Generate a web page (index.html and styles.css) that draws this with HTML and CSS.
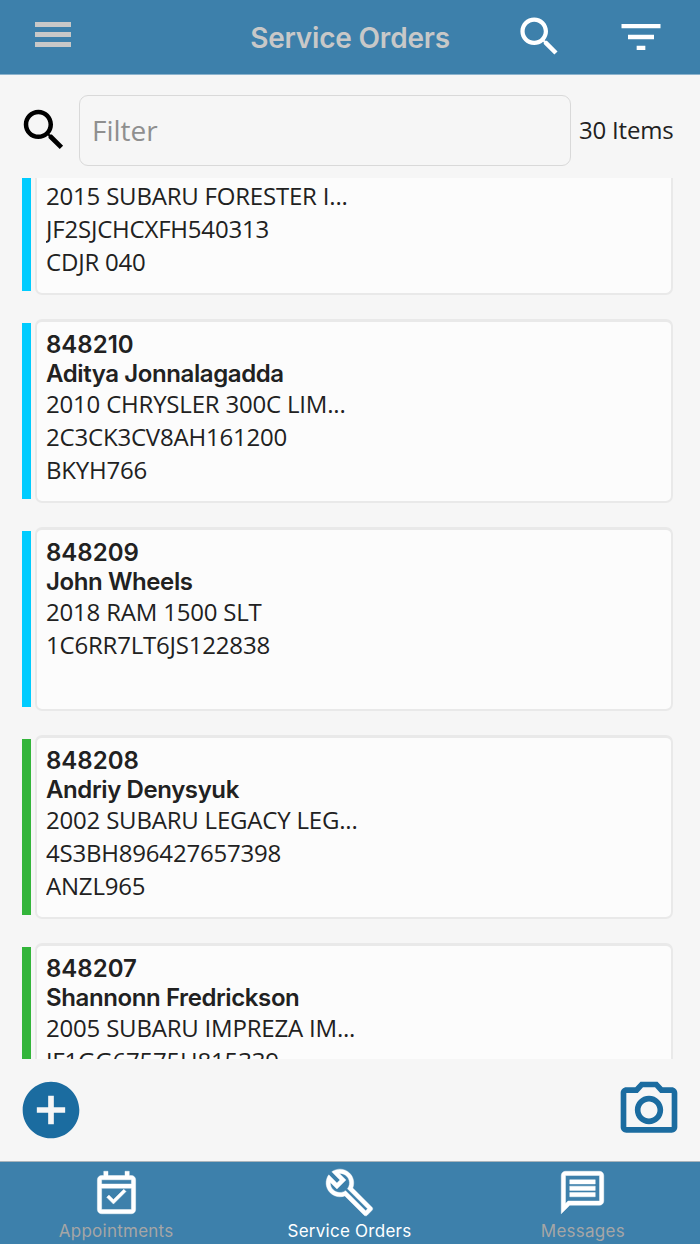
FILE: index.html
```
<!DOCTYPE html>
<html lang="en">
<head>
    <meta charset="UTF-8">
    <meta name="viewport" content="width=device-width, initial-scale=1.0">
    <title>Service Orders</title>
    <link rel="stylesheet" href="styles.css">
</head>
<body>

    <!-- Top bar -->
    <header class="topbar">
        <button type="button" class="menu" aria-label="Menu">
            <span></span>
            <span></span>
            <span></span>
        </button>
        <h1>Service Orders</h1>
        <div class="actions">
            <svg class="search-icon" viewBox="0 0 24 24"><path d="M15.5 14h-.79l-.28-.27C15.41 12.59 16 11.11 16 9.5 16 5.91 13.09 3 9.5 3S3 5.91 3 9.5 5.91 16 9.5 16c1.61 0 3.09-.59 4.23-1.57l.27.28v.79l5 4.99L20.49 19l-4.99-5zm-6 0C7.01 14 5 11.99 5 9.5S7.01 5 9.5 5 14 7.01 14 9.5 11.99 14 9.5 14z"/></svg>
            <svg class="filter-icon" viewBox="0 0 24 24"><path d="M10 18h4v-2h-4v2zM3 6v2h18V6H3zm3 7h12v-2H6v2z"/></svg>
        </div>
    </header>

    <!-- Filter row -->
    <div class="filter-row">
        <svg viewBox="0 0 24 24"><path d="M15.5 14h-.79l-.28-.27C15.41 12.59 16 11.11 16 9.5 16 5.91 13.09 3 9.5 3S3 5.91 3 9.5 5.91 16 9.5 16c1.61 0 3.09-.59 4.23-1.57l.27.28v.79l5 4.99L20.49 19l-4.99-5zm-6 0C7.01 14 5 11.99 5 9.5S7.01 5 9.5 5 14 7.01 14 9.5 11.99 14 9.5 14z"/></svg>
        <input type="text" placeholder="Filter">
        <span class="count">30 Items</span>
    </div>

    <!-- Orders -->
    <main class="orders">
        <div class="order scrolled">
            <div class="status open"></div>
            <div class="card">
                <p>2015 SUBARU FORESTER I...</p>
                <p>JF2SJCHCXFH540313</p>
                <p>CDJR 040</p>
            </div>
        </div>
        <div class="order">
            <div class="status open"></div>
            <div class="card">
                <h2 class="number">848210</h2>
                <h2>Aditya Jonnalagadda</h2>
                <p>2010 CHRYSLER 300C LIM...</p>
                <p>2C3CK3CV8AH161200</p>
                <p>BKYH766</p>
            </div>
        </div>
        <div class="order">
            <div class="status open"></div>
            <div class="card">
                <h2 class="number">848209</h2>
                <h2>John Wheels</h2>
                <p>2018 RAM 1500 SLT</p>
                <p>1C6RR7LT6JS122838</p>
            </div>
        </div>
        <div class="order">
            <div class="status done"></div>
            <div class="card">
                <h2 class="number">848208</h2>
                <h2>Andriy Denysyuk</h2>
                <p>2002 SUBARU LEGACY LEG...</p>
                <p>4S3BH896427657398</p>
                <p>ANZL965</p>
            </div>
        </div>
        <div class="order">
            <div class="status done"></div>
            <div class="card">
                <h2 class="number">848207</h2>
                <h2>Shannonn Fredrickson</h2>
                <p>2005 SUBARU IMPREZA IM...</p>
                <p>JF1GG67575H815339</p>
            </div>
        </div>
    </main>

    <!-- Add / camera buttons -->
    <div class="tools">
        <svg class="add" viewBox="0 0 24 24"><path d="M12 2C6.48 2 2 6.48 2 12s4.48 10 10 10 10-4.48 10-10S17.52 2 12 2zm5 11h-4v4h-2v-4H7v-2h4V7h2v4h4v2z"/></svg>
        <svg class="camera" viewBox="0 0 24 24"><path d="M14.12 4l1.83 2H20v12H4V6h4.05l1.83-2h4.24M15 2H9L7.17 4H4c-1.1 0-2 .9-2 2v12c0 1.1.9 2 2 2h16c1.1 0 2-.9 2-2V6c0-1.1-.9-2-2-2h-3.17L15 2zm-3 7c1.65 0 3 1.35 3 3s-1.35 3-3 3-3-1.35-3-3 1.35-3 3-3m0-2c-2.76 0-5 2.24-5 5s2.24 5 5 5 5-2.24 5-5-2.24-5-5-5z"/></svg>
    </div>

    <!-- Tab bar -->
    <nav class="tabs">
        <a class="tab">
            <svg viewBox="0 0 24 24"><path d="M19 4h-1V2h-2v2H8V2H6v2H5c-1.11 0-1.99.9-1.99 2L3 20c0 1.1.89 2 2 2h14c1.1 0 2-.9 2-2V6c0-1.1-.9-2-2-2zm0 16H5V10h14v10zm0-12H5V6h14v2zM10.56 17.46l5.93-5.93-1.06-1.06-4.87 4.87-2.11-2.11-1.06 1.06z"/></svg>
            <span>Appointments</span>
        </a>
        <a class="tab active">
            <svg viewBox="0 0 24 24"><path d="M22.61 18.99l-9.08-9.08c.93-2.34.45-5.1-1.44-7C9.79.61 6.21.4 3.66 2.26L7.5 6.11 6.08 7.52 2.25 3.69C.39 6.23.6 9.82 2.9 12.11c1.86 1.86 4.57 2.35 6.89 1.48l9.11 9.11c.39.39 1.02.39 1.41 0l2.3-2.3c.4-.38.4-1.01 0-1.41zm-3 1.6l-9.46-9.46c-.61.45-1.29.72-2 .82-1.36.2-2.79-.21-3.83-1.25C3.37 9.76 2.93 8.5 3 7.26l3.09 3.09 4.24-4.24-3.09-3.09c1.24-.07 2.49.37 3.44 1.31 1.08 1.08 1.49 2.57 1.24 3.96-.12.71-.42 1.37-.88 1.96l9.45 9.45-.88.89z"/></svg>
            <span>Service Orders</span>
        </a>
        <a class="tab">
            <svg viewBox="0 0 24 24"><path d="M20 2H4c-1.1 0-1.99.9-1.99 2L2 22l4-4h14c1.1 0 2-.9 2-2V4c0-1.1-.9-2-2-2zm0 14H5.17L4 17.17V4h16v12zM6 12h12v2H6zm0-3h12v2H6zm0-3h12v2H6z"/></svg>
            <span>Messages</span>
        </a>
    </nav>

</body>
</html>
```
FILE: styles.css
```
* {
    box-sizing: border-box;
}

html, body {
    height: 100%;
    margin: 0;
}

body {
    display: flex;
    flex-direction: column;
    background-color: #f6f6f6;
    color: #212121;
    font-family: "Open Sans", sans-serif;
    font-size: 24px;
    letter-spacing: -0.2px;
    overflow: hidden;
}

h1, h2, p {
    margin: 0;
}

svg {
    display: block;
    flex: none;
}

/* Top bar */
.topbar {
    flex: none;
    display: grid;
    grid-template-columns: 1fr auto 1fr;
    height: 75px;
    padding: 0 35px;
    background-color: #3d80ab;
    border-bottom: 1px solid #8cb3cd;
}

.menu {
    display: flex;
    flex-direction: column;
    gap: 5px;
    width: 36px;
    margin-top: 22px;
    padding: 0;
    border: none;
    background: none;
}

.menu span {
    display: block;
    width: 36px;
    height: 5px;
    background-color: #c8c8c8;
}

.topbar h1 {
    color: #c8c8c8;
    font-family: Inter, sans-serif;
    font-size: 28px;
    font-weight: 600;
    line-height: 76px;
}

.actions {
    display: flex;
    justify-content: flex-end;
    gap: 50px;
    padding-top: 11px;
    fill: #fff;
}

.search-icon {
    width: 51px;
    height: 51px;
}

.filter-icon {
    width: 52px;
    height: 52px;
    margin-right: -2px;
}

/* Filter row */
.filter-row {
    flex: none;
    display: flex;
    align-items: center;
    height: 103px;
    padding: 8px 16px 0 17px;
}

.filter-row svg {
    width: 54px;
    height: 54px;
    margin: 0 8px 2px 0;
}

.filter-row input {
    width: 492px;
    height: 71px;
    margin-right: 8px;
    padding: 0 12px 1px;
    border: 1px solid #d9d9d9;
    border-radius: 9px;
    background: none;
    font-family: inherit;
    font-size: 28px;
}

.filter-row input::placeholder {
    color: #8f8f8f;
}

.count {
    padding-bottom: 2px;
    white-space: nowrap;
}

/* Order list */
.orders {
    flex: none;
    height: 881px;
    padding: 0 27px 0 22px;
    overflow: hidden;
}

.order {
    display: flex;
    gap: 4px;
    height: 183px;
    margin-bottom: 25px;
}

.status {
    width: 9px;
    margin: 3px 0 4px;
}

.open {
    background-color: #00ccff;
}

.done {
    background-color: #33b53a;
}

.card {
    flex: 1;
    margin-top: -1px;
    padding: 9px 9px 8px;
    border: 2px solid #e9e9e9;
    border-top-width: 3px;
    border-radius: 7px;
    background-color: #fcfcfc;
}

.card h2 {
    font-family: Inter, sans-serif;
    font-size: 24px;
    font-weight: 600;
    line-height: 28.6px;
    letter-spacing: -0.4px;
}

.card .number {
    letter-spacing: 0;
}

.card p {
    line-height: 32.7px;
    overflow: hidden;
}

/* First order, partly under the filter row */
.scrolled {
    height: 117px;
}

.scrolled .status {
    margin-top: 0;
}

.scrolled .card {
    margin-top: 0;
    padding-top: 2.4px;
    border-top: none;
    border-top-left-radius: 0;
    border-top-right-radius: 0;
}

/* Add and camera */
.tools {
    flex: 1;
    display: flex;
    justify-content: space-between;
    padding: 17px;
    fill: #1b6ca0;
}

.tools svg {
    width: 68px;
    height: 68px;
}

/* Tab bar */
.tabs {
    flex: none;
    display: grid;
    grid-template-columns: repeat(3, 1fr);
    height: 84px;
    border-top: 1px solid #a9b4bb;
    background-color: #3d80ab;
    fill: #fff;
}

.tab {
    display: flex;
    flex-direction: column;
    align-items: center;
    padding-top: 5px;
    color: #a6a6a6;
    font-family: Inter, sans-serif;
    font-size: 17px;
    line-height: 22px;
    letter-spacing: 0.25px;
}

.tab svg {
    width: 51px;
    height: 51px;
    margin: 0 1px 2px 0;
    stroke: #fff;
    stroke-width: 0.2;
}

.tab span {
    margin-right: 1px;
}

.active {
    color: #fff;
}
```
